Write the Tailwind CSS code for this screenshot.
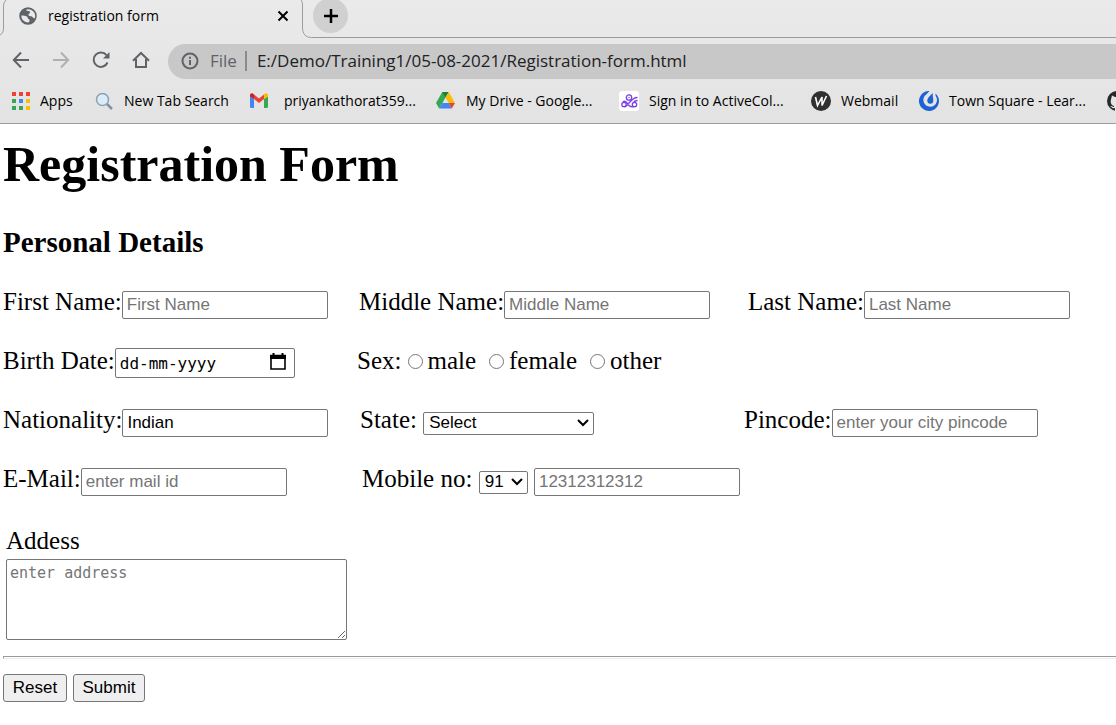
<!DOCTYPE html>
<html lang="en">
<head>
<meta charset="utf-8">
<meta name="viewport" content="width=device-width, initial-scale=1">
<title>registration form</title>
<script src="https://cdn.jsdelivr.net/npm/@tailwindcss/browser@4"></script>
</head>
<body class="min-h-screen overflow-x-hidden bg-white text-black">
<header class="overflow-hidden border-b border-[#9c9c9c] bg-linear-to-b from-[#eaeaea] to-[#e3e3e3] font-['Open_Sans',sans-serif]">
  <div class="flex h-[38px]">
    <svg class="h-[38px] w-3 shrink-0" viewBox="0 0 12 38" fill="none" stroke="#9c9c9c"><path d="M0 35C3 33 3.500 31 3.500 28V7C3.500 4 4 2 6 0"/></svg>
    <div class="flex h-8 w-[282px] items-center">
      <svg class="ml-1.5 size-5 shrink-0" viewBox="0 0 24 24" fill="#5f6368"><path d="M12 1.500a10.500 10.500 0 1 0 0 21 10.500 10.500 0 0 0 0-21zM20 15c-1 0-2-1-3-2-1-1-3-.500-4-1.500-1-.800-.500-2 .500-2.500 1-.400 1.200-1.500.500-2.500-1-1-3 0-4-1C9.500 5 10.500 4 12 4a8 8 0 0 1 8 11zM4 11.500c2 .500 5 0 7 1.500 1 1 .500 2.500 2 3 1.500.600 1 3-.500 3.800A8 8 0 0 1 4 11.500z" fill-rule="evenodd"/></svg>
      <span class="ml-2.5 text-sm">registration form</span>
      <button aria-label="Close tab" class="mr-[3px] ml-auto"><svg class="size-4" viewBox="0 0 16 16" stroke="#000" stroke-width="2"><path d="M3.500 3.500l9 9M12.500 3.500l-9 9"/></svg></button>
    </div>
    <div class="relative min-w-0 grow">
      <svg class="absolute top-0 left-0 h-[38px] w-6" viewBox="0 0 24 38" fill="none" stroke="#9c9c9c"><path d="M7 0c1 1 1.500 3 1.500 5v22c0 7 3 10.500 9 10.500h7"/></svg>
      <div class="ml-6 h-[38px] border-b border-[#9c9c9c]"></div>
      <button aria-label="New tab" class="absolute -top-0.5 left-[19px] flex size-[35px] items-center justify-center rounded-full bg-[#d0d0d0]"><svg class="size-4" viewBox="0 0 16 16" stroke="#000" stroke-width="2.500"><path d="M8 1v14M1 8h14"/></svg></button>
    </div>
  </div>
  <div class="flex h-[46px] items-center text-[#5f6368]">
    <div class="flex w-[168px] shrink-0 gap-5 pb-0.5 pl-[11px]">
      <button aria-label="Back"><svg class="size-5" viewBox="0 0 20 20" fill="none" stroke="#5f6368" stroke-width="2"><path d="M18 10H3M10 2.500L2.800 10l7.200 7.500"/></svg></button>
      <button aria-label="Forward"><svg class="size-5" viewBox="0 0 20 20" fill="none" stroke="#aeb0b2" stroke-width="2"><path d="M2 10h15M10 2.500l7.200 7.500-7.200 7.500"/></svg></button>
      <button aria-label="Reload"><svg class="size-5" viewBox="0 0 20 20" fill="none" stroke="#5f6368" stroke-width="2"><path d="M16.500 12.500A7.200 7.200 0 1 1 15.500 5.200"/><path d="M18.500 2v6.500H12z" fill="#5f6368" stroke="none"/></svg></button>
      <button aria-label="Home"><svg class="size-5" viewBox="0 0 20 20" fill="none" stroke="#5f6368" stroke-width="2"><path d="M5 9v8h10V9M2 10.800L10 3l8 7.800"/></svg></button>
    </div>
    <div class="flex h-[35px] grow items-center rounded-l-full bg-[#c8c8c8] pl-3">
      <svg class="size-5 shrink-0" viewBox="0 0 20 20" fill="none" stroke="#5f6368" stroke-width="2"><circle cx="10" cy="10" r="7.500"/><path d="M10 9v5M10 5.800v2"/></svg>
      <span class="ml-2.5 text-[17px]">File</span>
      <span class="mx-2 h-5 w-0.5 bg-[#8a8a8a]"></span>
      <input aria-label="Address bar" value="E:/Demo/Training1/05-08-2021/Registration-form.html" class="ml-0.5 min-w-0 grow text-[17px] text-[#202124] outline-none">
    </div>
  </div>
  <nav class="flex h-[39px] items-center pb-1.5 text-sm whitespace-nowrap text-black">
    <a href="#" class="flex w-[83px] shrink-0 items-center gap-2.5 pl-3"><svg class="size-[18px] shrink-0" viewBox="0 0 18 18"><g fill="#ea4335"><path d="M0 0h4v4H0zM7 0h4v4H7zM14 0h4v4h-4z"/></g><g fill="#34a853"><path d="M0 7h4v4H0zM0 14h4v4H0zM7 14h4v4H7z"/></g><path fill="#4285f4" d="M7 7h4v4H7z"/><path fill="#fbbc04" d="M14 7h4v4h-4zM14 14h4v4h-4z"/></svg>Apps</a>
    <a href="#" class="flex w-[165px] shrink-0 items-center gap-[11px] pl-3"><svg class="size-[18px] shrink-0" viewBox="0 0 18 18"><circle cx="7.500" cy="7.500" r="6" fill="#d9ecf7" stroke="#8ba0b2" stroke-width="1.500"/><path d="M12 12l5 5" stroke="#7f93a5" stroke-width="2.500"/></svg>New Tab Search</a>
    <a href="#" class="flex w-[188px] shrink-0 items-center gap-4 pl-0.5"><svg class="h-[15px] w-[18px] shrink-0" viewBox="0 0 18 15"><path fill="#4285f4" d="M0 3v10.500Q0 15 1.500 15H4V6z"/><path fill="#34a853" d="M14 6v9h2.500q1.500 0 1.500-1.500V3z"/><path fill="#ea4335" d="M4 6V1.500L9 5.500l5-4V6L9 10z"/><path fill="#c5221f" d="M0 2.500v1L4 6V1.500L3 .700C1.500-.300 0 .700 0 2.500z"/><path fill="#fbbc04" d="M18 2.500v1L14 6V1.500l1-.800c1.500-1 3 0 3 1.800z"/></svg>priyankathorat359...</a>
    <a href="#" class="flex w-[183px] shrink-0 items-center gap-[11px]"><svg class="h-[17px] w-[19px] shrink-0" viewBox="0 0 19 17"><path fill="#34a853" d="M6.300 0h3.200v5.500L3.200 16.500 0 11z"/><path fill="#188038" d="M6.300 0h6.400L9.500 5.500z"/><path fill="#fbbc04" d="M12.700 0L19 11h-6.300L9.500 5.500z"/><path fill="#4285f4" d="M3.200 16.500L6.300 11h6.400l3.100 5.500z"/><path fill="#ea4335" d="M12.700 11H19l-3.200 5.500z"/></svg>My Drive - Google...</a>
    <a href="#" class="flex w-48 shrink-0 items-center gap-2.5"><svg class="size-5 shrink-0" viewBox="0 0 20 20"><rect width="20" height="20" rx="3" fill="#fff"/><g fill="none" stroke="#7b3fe4" stroke-width="1.300"><circle cx="10" cy="6.500" r="2.700"/><circle cx="5" cy="13.500" r="2.200"/><circle cx="15.500" cy="13.500" r="2.200"/><path d="M4 11.200C6 8.500 8 12 10 14.500c1.500 1.800 3.500 1.500 5.500 1.200M18.500 6.500c-4 0-6.500 3-8.500 5.500-1.500 2.500-3 4-5 3.700M18.500 9.500c-2 0-3 .500-4 1.800"/><path d="M10 6v1"/></g></svg>Sign in to ActiveCol...</a>
    <a href="#" class="flex w-[108px] shrink-0 items-center gap-2.5"><svg class="size-5 shrink-0" viewBox="0 0 20 20"><circle cx="10" cy="10" r="10" fill="#303030"/><path d="M4.500 6l2 8.500L11 6v8.500L15.500 5" fill="none" stroke="#fff" stroke-width="1.600"/></svg>Webmail</a>
    <a href="#" class="flex w-[188px] shrink-0 items-center gap-2.5"><svg class="size-5 shrink-0" viewBox="0 0 20 20" fill="#1c63d5"><path d="M10.500 0A10 10 0 1 0 16.500 2.400L16.600 4.800A6.800 6.800 0 1 1 7.500 3.200z"/><path d="M13.300 2.200c-1.300 2-5 4.300-5 7.300a3 3 0 0 0 6 .300c.200-2-.700-4-.600-7.400z"/></svg>Town Square - Lear...</a>
    <a href="#" aria-label="GitHub" class="shrink-0"><svg class="size-5" viewBox="0 0 20 20"><circle cx="10" cy="10" r="10" fill="#24292e"/><path d="M5 4.500l3 1.500h4l3-1.500.500 4c1 4-1 6-3.500 6.500V20H8v-3c-3 1-3-1-5-2 2-.500 3 1 4 1v-1C4.500 14.500 3 12 4 8.500z" fill="#e5e5e5"/></svg></a>
  </nav>
</header>
<main class="pl-[3px] font-['Liberation_Serif',serif]">
  <h1 class="pt-3 text-[50px] leading-[56px] font-bold">Registration Form</h1>
  <h3 class="mt-[34px] text-[29px] leading-8 font-bold">Personal Details</h3>
  <form class="mt-[30px] text-[25px] leading-7">
    <div class="grid auto-rows-[59px]">
      <div class="flex items-baseline whitespace-nowrap">
        <div class="w-[356px] shrink-0"><label for="first">First Name:</label><input id="first" placeholder="First Name" class="h-7 w-[206px] rounded-xs border border-[#767676] px-1 font-['Liberation_Sans',sans-serif] text-[17px] placeholder:text-[#757575]"></div>
        <div class="w-[389px] shrink-0"><label for="middle">Middle Name:</label><input id="middle" placeholder="Middle Name" class="h-7 w-[206px] rounded-xs border border-[#767676] px-1 font-['Liberation_Sans',sans-serif] text-[17px] placeholder:text-[#757575]"></div>
        <div><label for="last">Last Name:</label><input id="last" placeholder="Last Name" class="h-7 w-[206px] rounded-xs border border-[#767676] px-1 font-['Liberation_Sans',sans-serif] text-[17px] placeholder:text-[#757575]"></div>
      </div>
      <div class="flex items-baseline whitespace-nowrap">
        <div class="flex w-[354px] shrink-0 items-baseline"><label for="birth">Birth Date:</label><div class="flex h-[30px] w-[180px] items-center rounded-xs border border-[#767676] pt-0.5 pr-2 pl-1"><input id="birth" placeholder="dd-mm-yyyy" class="w-0 grow font-['DejaVu_Sans_Mono',monospace] text-base outline-none placeholder:text-black"><button type="button" aria-label="Choose date" class="pb-1"><svg class="h-[18px] w-4" viewBox="0 0 16 18"><path d="M1 2.500h14v13.500H1z" fill="none" stroke="#000" stroke-width="1.600"/><path d="M0 2h16v4H0zM2.500 0h2v3h-2zM11.500 0h2v3h-2z"/></svg></button></div></div>
        <fieldset class="flex items-baseline"><legend class="float-left mr-[7px]">Sex:</legend>
          <input type="radio" name="sex" id="male" class="mr-1 size-[15px]"><label for="male" class="mr-[13px]">male</label>
          <input type="radio" name="sex" id="female" class="mr-[5px] size-[15px]"><label for="female" class="mr-[13px]">female</label>
          <input type="radio" name="sex" id="other" class="mr-[5px] size-[15px]"><label for="other">other</label>
        </fieldset>
      </div>
      <div class="flex items-baseline whitespace-nowrap">
        <div class="w-[357px] shrink-0"><label for="nation">Nationality:</label><input id="nation" value="Indian" class="h-7 w-[206px] rounded-xs border border-[#767676] px-1 font-['Liberation_Sans',sans-serif] text-[17px]"></div>
        <div class="w-96 shrink-0"><label for="state">State:</label> <span class="relative inline-block"><select id="state" class="h-[23px] w-[171px] appearance-none rounded-xs border border-[#767676] bg-white pl-[5px] font-['Liberation_Sans',sans-serif] text-[17px] leading-5"><option>Select</option></select><svg class="pointer-events-none absolute right-[5px] bottom-2 h-2 w-3" viewBox="0 0 12 8" fill="none" stroke="#000" stroke-width="2"><path d="M1 1l5 5 5-5"/></svg></span></div>
        <div><label for="pin">Pincode:</label><input id="pin" placeholder="enter your city pincode" class="h-7 w-[206px] rounded-xs border border-[#767676] px-1 font-['Liberation_Sans',sans-serif] text-[17px] placeholder:text-[#757575]"></div>
      </div>
      <div class="flex items-baseline whitespace-nowrap">
        <div class="w-[359px] shrink-0"><label for="mail">E-Mail:</label><input id="mail" type="email" placeholder="enter mail id" class="h-7 w-[206px] rounded-xs border border-[#767676] px-1 font-['Liberation_Sans',sans-serif] text-[17px] placeholder:text-[#757575]"></div>
        <div><label for="mobile">Mobile no:</label> <span class="relative inline-block"><select aria-label="Country code" class="h-[23px] w-[49px] appearance-none rounded-xs border border-[#767676] bg-white pl-[5px] font-['Liberation_Sans',sans-serif] text-[17px] leading-5"><option>91</option></select><svg class="pointer-events-none absolute right-[5px] bottom-2 h-2 w-3" viewBox="0 0 12 8" fill="none" stroke="#000" stroke-width="2"><path d="M1 1l5 5 5-5"/></svg></span> <input id="mobile" type="tel" placeholder="12312312312" class="h-7 w-[206px] rounded-xs border border-[#767676] px-1 font-['Liberation_Sans',sans-serif] text-[17px] placeholder:text-[#757575]"></div>
      </div>
    </div>
    <div class="mt-[3px] pl-[3px]">
      <label for="address" class="block">Addess</label>
      <textarea id="address" placeholder="enter address" class="mt-1 block h-[81px] w-[341px] rounded-xs border border-[#767676] px-[3px] py-[3px] font-['DejaVu_Sans_Mono',monospace] text-[15px] leading-5 placeholder:text-[#757575]"></textarea>
    </div>
    <hr class="mt-4 h-[3px] border border-t-[#9a9a9a] border-r-0 border-b-[#eee] border-l-[#9a9a9a]">
    <div class="mt-[15px] flex gap-1.5 font-['Liberation_Sans',sans-serif] text-[17px] leading-5">
      <button type="reset" class="h-7 w-16 rounded-[3px] border border-[#767676] bg-[#efefef]">Reset</button>
      <button type="submit" class="h-7 w-[72px] rounded-[3px] border border-[#767676] bg-[#efefef]">Submit</button>
    </div>
  </form>
</main>
</body>
</html>
